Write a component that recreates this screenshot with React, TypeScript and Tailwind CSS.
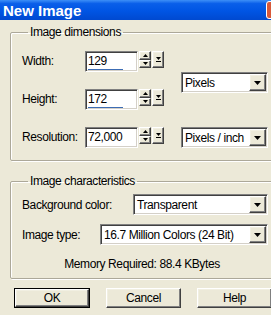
const sunken =
  'border border-t-[#808080] border-l-[#808080] border-b-white border-r-white shadow-[inset_1px_1px_0_#404040,inset_-1px_-1px_0_#d4d0c8]';
const raised =
  'border border-t-white border-l-white border-b-[#404040] border-r-[#404040] shadow-[inset_-1px_-1px_0_#808080,inset_1px_1px_0_#f1efe2] bg-[#ece9d8]';

function DownTri({ w = 7 }: { w?: number }) {
  const h = Math.ceil(w / 2);
  return (
    <svg width={w} height={h} viewBox={`0 0 ${w} ${h}`} className="block">
      <polygon points={`0,0 ${w},0 ${w / 2},${h}`} fill="#000" />
    </svg>
  );
}

function UpTri({ w = 5 }: { w?: number }) {
  const h = Math.ceil(w / 2);
  return (
    <svg width={w} height={h} viewBox={`0 0 ${w} ${h}`} className="block">
      <polygon points={`0,${h} ${w},${h} ${w / 2},0`} fill="#000" />
    </svg>
  );
}

function Combo({ value, width }: { value: string; width: number }) {
  return (
    <div
      className={`${sunken} h-[21px] bg-white flex items-stretch`}
      style={{ width }}
    >
      <div className="flex-1 min-w-0 pl-[3px] flex items-center leading-none whitespace-nowrap">
        {value}
      </div>
      <div className={`${raised} w-[17px] m-[1px] flex items-center justify-center`}>
        <DownTri />
      </div>
    </div>
  );
}

function NumField({ value, bar }: { value: string; bar?: boolean }) {
  return (
    <div className="flex items-start gap-[1px]">
      <div className={`${sunken} w-[53px] h-[21px] bg-white flex flex-col`}>
        <div className="pl-[2px] pt-[2px] leading-[15px]">{value}</div>
        {bar && <div className="mt-auto mb-[1px] ml-[2px] w-[35px] h-[2px] bg-[#3c6cb4]" />}
      </div>
      <div className="w-[12px] h-[17px] flex flex-col">
        <div className={`${raised} flex-1 flex items-center justify-center`}>
          <UpTri />
        </div>
        <div className={`${raised} flex-1 flex items-center justify-center`}>
          <DownTri w={5} />
        </div>
      </div>
      <div className={`${raised} w-[12px] h-[17px] flex flex-col items-center justify-center gap-[1px]`}>
        <DownTri w={5} />
        <div className="w-[5px] h-[1px] bg-black" />
      </div>
    </div>
  );
}

function Group({ title, className, children }: { title: string; className?: string; children: React.ReactNode }) {
  return (
    <fieldset
      className={`w-[264px] ml-[10px] border border-[#aca899] rounded-[2px] shadow-[1px_1px_0_#fff,inset_1px_1px_0_#fff] ${className ?? ''}`}
    >
      <legend className="ml-[6px] px-[2px] leading-[14px]">{title}</legend>
      {children}
    </fieldset>
  );
}

function Button({ label, def }: { label: string; def?: boolean }) {
  return (
    <div className={def ? 'border border-black' : ''}>
      <div
        className={`${raised} ${def ? 'w-[74px] h-[18px]' : 'w-[75px] h-[20px]'} flex items-center justify-center leading-none`}
      >
        {label}
      </div>
    </div>
  );
}

export default function App() {
  return (
    <div className="w-[271px] h-[315px] overflow-hidden bg-[#ece9d8] text-black text-[12px] tracking-[-0.4px] font-['Liberation_Sans',Arial,sans-serif]">
      <div className="h-[20px] flex items-center justify-between bg-[linear-gradient(180deg,#3d8ff7_0%,#0a5fe9_18%,#0055e4_55%,#0049d0_100%)] overflow-hidden">
        <span className="pl-[3px] text-white font-bold text-[15px] tracking-normal leading-none">New Image</span>
        <div className="w-[21px] h-[18px] mr-[-16px] rounded-[3px] border border-white bg-[#d8593a]" />
      </div>

      <Group title="Image dimensions" className="mt-[5px] pl-[11px] pr-[5px] pt-[12px] pb-[12px]">
        <div className="flex">
          <div className="flex flex-col gap-[17px]">
            <div className="flex items-start">
              <span className="w-[63px] leading-[21px]">Width:</span>
              <NumField value="129" bar />
            </div>
            <div className="flex items-start">
              <span className="w-[63px] leading-[21px]">Height:</span>
              <NumField value="172" bar />
            </div>
            <div className="flex items-start">
              <span className="w-[63px] leading-[21px]">Resolution:</span>
              <NumField value="72,000" />
            </div>
          </div>
          <div className="ml-auto flex flex-col">
            <div className="mt-[21px]">
              <Combo value="Pixels" width={87} />
            </div>
            <div className="mt-auto">
              <Combo value="Pixels / inch" width={87} />
            </div>
          </div>
        </div>
      </Group>

      <Group title="Image characteristics" className="mt-[13px] pl-[11px] pr-[5px] pt-[6px] pb-[7px]">
        <div className="flex flex-col gap-[9px]">
          <div className="flex items-center">
            <span>Background color:</span>
            <div className="ml-auto">
              <Combo value="Transparent" width={135} />
            </div>
          </div>
          <div className="flex items-center">
            <span>Image type:</span>
            <div className="ml-auto">
              <Combo value="16.7 Million Colors (24 Bit)" width={168} />
            </div>
          </div>
          <div className="mt-[3px] text-center leading-[14px] pr-[6px]">Memory Required: 88.4 KBytes</div>
        </div>
      </Group>

      <div className="mt-[9px] pl-[14px] flex gap-[16px]">
        <Button label="OK" def />
        <Button label="Cancel" />
        <Button label="Help" />
      </div>
    </div>
  );
}
